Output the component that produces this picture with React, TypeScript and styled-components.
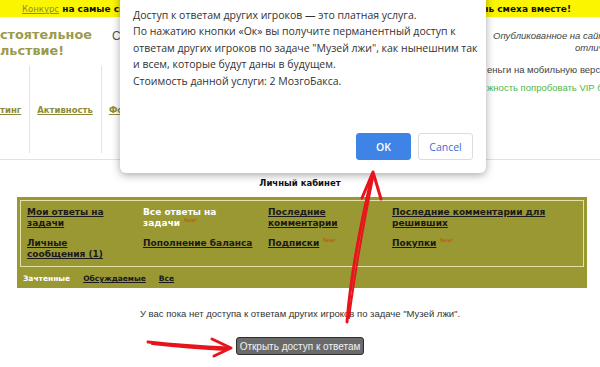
import React from "react";
import styled, { createGlobalStyle } from "styled-components";

const GlobalStyle = createGlobalStyle`
  body {
    margin: 0;
    background: #fff;
  }
`;

const Page = styled.div`
  position: relative;
  width: 600px;
  height: 367px;
  overflow: hidden;
  background: #fff;
  font-family: "DejaVu Sans", Verdana, sans-serif;
`;

const TopBar = styled.div`
  height: 17px;
  background: #fbf600;
  display: flex;
  justify-content: space-between;
  align-items: center;
  padding: 0 29px 0 22px;
  font-size: 9px;
  font-weight: bold;
  color: #111;
  white-space: nowrap;
`;

const ContestLink = styled.a`
  color: #8d8b3a;
  font-weight: normal;
  font-size: 8.5px;
  text-decoration: underline;
`;

const Header = styled.div`
  display: grid;
  grid-template-columns: 105px 382px 1fr;
  height: 142px;
  border-bottom: 1px solid #e2e2e2;
`;

const LeftCol = styled.div`
  display: flex;
  flex-direction: column;
`;

const Logo = styled.div`
  margin-top: 10px;
  font-size: 12.8px;
  font-weight: bold;
  line-height: 16px;
  color: #9c9a4b;
  white-space: nowrap;
`;

const NavRow = styled.div`
  display: flex;
  align-items: center;
  height: 87px;
  margin-top: 7px;
`;

const NavItem = styled.a<{ first?: boolean }>`
  display: flex;
  align-items: center;
  height: 100%;
  padding: 0 8px 0 ${(p) => (p.first ? "0" : "7px")};
  border-right: 1px solid #e4e4e4;
  font-size: 8.5px;
  font-weight: bold;
  color: #8d8b3a;
  text-decoration: underline;
  white-space: nowrap;
`;

const Slogan = styled.div`
  padding: 12px 0 0 7px;
  font-family: "Liberation Sans", Arial, sans-serif;
  font-size: 12px;
  color: #555;
`;

const RightCol = styled.div`
  display: flex;
  flex-direction: column;
  font-family: "Liberation Sans", Arial, sans-serif;
  font-size: 9.5px;
  color: #444;
  white-space: nowrap;
  overflow: hidden;
`;

const Note = styled.div<{ indent: number; top: number }>`
  padding-left: ${(p) => p.indent}px;
  margin-top: ${(p) => p.top}px;
  line-height: 12px;
  font-style: italic;
`;

const Info = styled.div<{ green?: boolean; top: number }>`
  margin-top: ${(p) => p.top}px;
  line-height: 12px;
  color: ${(p) => (p.green ? "#4cb84c" : "#444")};
`;

const Title = styled.div`
  margin-top: 18px;
  text-align: center;
  font-size: 8.5px;
  font-weight: bold;
  color: #111;
`;

const Panel = styled.div`
  margin: 9px 13px 0 17px;
  padding: 3px 3px 0 3px;
  background: #9a9833;
`;

const MenuBox = styled.div`
  display: grid;
  grid-template-columns: 116px 125px 124px 1fr;
  row-gap: 9px;
  padding: 6px 6px 6px 6px;
  border: 1px solid #e3e1a6;
`;

const MenuCell = styled.div`
  padding-right: 8px;
  font-size: 9px;
  line-height: 11px;
`;

const MenuLink = styled.a<{ active?: boolean }>`
  font-weight: bold;
  color: ${(p) => (p.active ? "#fff" : "#1a1a1a")};
  text-decoration: ${(p) => (p.active ? "none" : "underline")};
`;

const NewBadge = styled.span`
  margin-left: 4px;
  font-size: 5px;
  line-height: 0;
  color: #d23c00;
  vertical-align: 4px;
`;

const Tabs = styled.div`
  display: flex;
  gap: 13px;
  align-items: center;
  height: 21px;
  padding: 2px 0 0 3px;
  box-sizing: border-box;
`;

const Tab = styled.a<{ active?: boolean }>`
  font-size: 7.5px;
  font-weight: bold;
  color: ${(p) => (p.active ? "#fff" : "#1a1a1a")};
  text-decoration: ${(p) => (p.active ? "none" : "underline")};
`;

const Notice = styled.div`
  margin-top: 20px;
  text-align: center;
  font-family: "Liberation Sans", Arial, sans-serif;
  font-size: 9.5px;
  color: #333;
`;

const OpenButton = styled.button`
  display: block;
  margin: 18px auto 0;
  height: 18px;
  padding: 0 3px;
  background: #6a6a6a;
  border: 1px solid #2e2e2e;
  border-radius: 3px;
  color: #f2f2f2;
  font-family: "Liberation Sans", Arial, sans-serif;
  font-size: 10px;
`;

const Dialog = styled.div`
  position: absolute;
  left: 120px;
  top: -12px;
  width: 366px;
  height: 185px;
  box-sizing: border-box;
  padding: 19px 13px 13px 13px;
  background: #fff;
  border-radius: 0 0 6px 6px;
  box-shadow: 0 2px 8px rgba(0, 0, 0, 0.35);
  display: flex;
  flex-direction: column;
  justify-content: space-between;
  font-family: "Open Sans", "Noto Sans", sans-serif;
`;

const Message = styled.div`
  font-size: 10.5px;
  line-height: 16.4px;
  color: #333;
  white-space: nowrap;
`;

const Actions = styled.div`
  display: flex;
  justify-content: flex-end;
  gap: 7px;
`;

const DialogButton = styled.button<{ primary?: boolean }>`
  height: 27px;
  min-width: 55px;
  border-radius: 3px;
  font-family: "Open Sans", "Noto Sans", sans-serif;
  font-size: 10.5px;
  font-weight: ${(p) => (p.primary ? 600 : 400)};
  background: ${(p) => (p.primary ? "#3d84e6" : "#fff")};
  color: ${(p) => (p.primary ? "#fff" : "#3a6fd4")};
  border: 1px solid ${(p) => (p.primary ? "#3d84e6" : "#dcdcdc")};
`;

const Annotations = styled.svg`
  position: absolute;
  left: 0;
  top: 0;
  pointer-events: none;
`;

const menu = [
  { text: "Мои ответы на задачи" },
  { text: "Все ответы на задачи", active: true, isNew: true },
  { text: "Последние комментарии" },
  { text: "Последние комментарии для решивших" },
  { text: "Личные сообщения\u00a0(1)" },
  { text: "Пополнение баланса" },
  { text: "Подписки", isNew: true },
  { text: "Покупки", isNew: true },
];

export default function App() {
  return (
    <>
      <GlobalStyle />
      <Page>
        <TopBar>
          <span>
            <ContestLink>Конкурс</ContestLink> на самые смешные задачи! Проведи
          </span>
          <span>день смеха вместе!</span>
        </TopBar>
        <Header>
          <LeftCol>
            <Logo>
              стоятельное
              <br />
              льствие!
            </Logo>
            <NavRow>
              <NavItem first>тинг</NavItem>
              <NavItem>Активность</NavItem>
              <NavItem>Форум</NavItem>
            </NavRow>
          </LeftCol>
          <Slogan>С задачами время летит незаметно</Slogan>
          <RightCol>
            <Note indent={6} top={13}>
              Опубликованное на сайте
            </Note>
            <Note indent={88} top={0}>
              отличное
            </Note>
            <Info top={10}>еньги на мобильную версию</Info>
            <Info green top={6}>
              жность попробовать VIP бесплатно
            </Info>
          </RightCol>
        </Header>

        <Title>Личный кабинет</Title>
        <Panel>
          <MenuBox>
            {menu.map((m) => (
              <MenuCell key={m.text}>
                <MenuLink active={m.active}>{m.text}</MenuLink>
                {m.isNew && <NewBadge>New!</NewBadge>}
              </MenuCell>
            ))}
          </MenuBox>
          <Tabs>
            <Tab active>Зачтенные</Tab>
            <Tab>Обсуждаемые</Tab>
            <Tab>Все</Tab>
          </Tabs>
        </Panel>

        <Notice>
          У вас пока нет доступа к ответам других игроков по задаче "Музей лжи".
        </Notice>
        <OpenButton>Открыть доступ к ответам</OpenButton>

        <Dialog>
          <Message>
            <div>Доступ к ответам других игроков — это платная услуга.</div>
            <div>По нажатию кнопки «Ок» вы получите перманентный доступ к</div>
            <div>ответам других игроков по задаче "Музей лжи", как нынешним так</div>
            <div>и всем, которые будут даны в будущем.</div>
            <div>Стоимость данной услуги: 2 МозгоБакса.</div>
          </Message>
          <Actions>
            <DialogButton primary>OK</DialogButton>
            <DialogButton>Cancel</DialogButton>
          </Actions>
        </Dialog>

        <Annotations width="600" height="367" viewBox="0 0 600 367">
          <g fill="none" stroke="#e8141b" strokeLinecap="round" strokeLinejoin="round">
            <path d="M347 322 C 350 285, 358 235, 372 176" strokeWidth="3" />
            <path d="M349 318 C 354 280, 362 232, 373 178" strokeWidth="2" />
            <path d="M362 198 L373 172 L381 199" strokeWidth="3" />
            <path d="M148 342 C 175 345, 205 347, 229 348" strokeWidth="3" />
            <path d="M152 344 C 180 347, 205 349, 226 350" strokeWidth="2" />
            <path d="M212 339 L231 348 L214 356" strokeWidth="3" />
          </g>
        </Annotations>
      </Page>
    </>
  );
}
